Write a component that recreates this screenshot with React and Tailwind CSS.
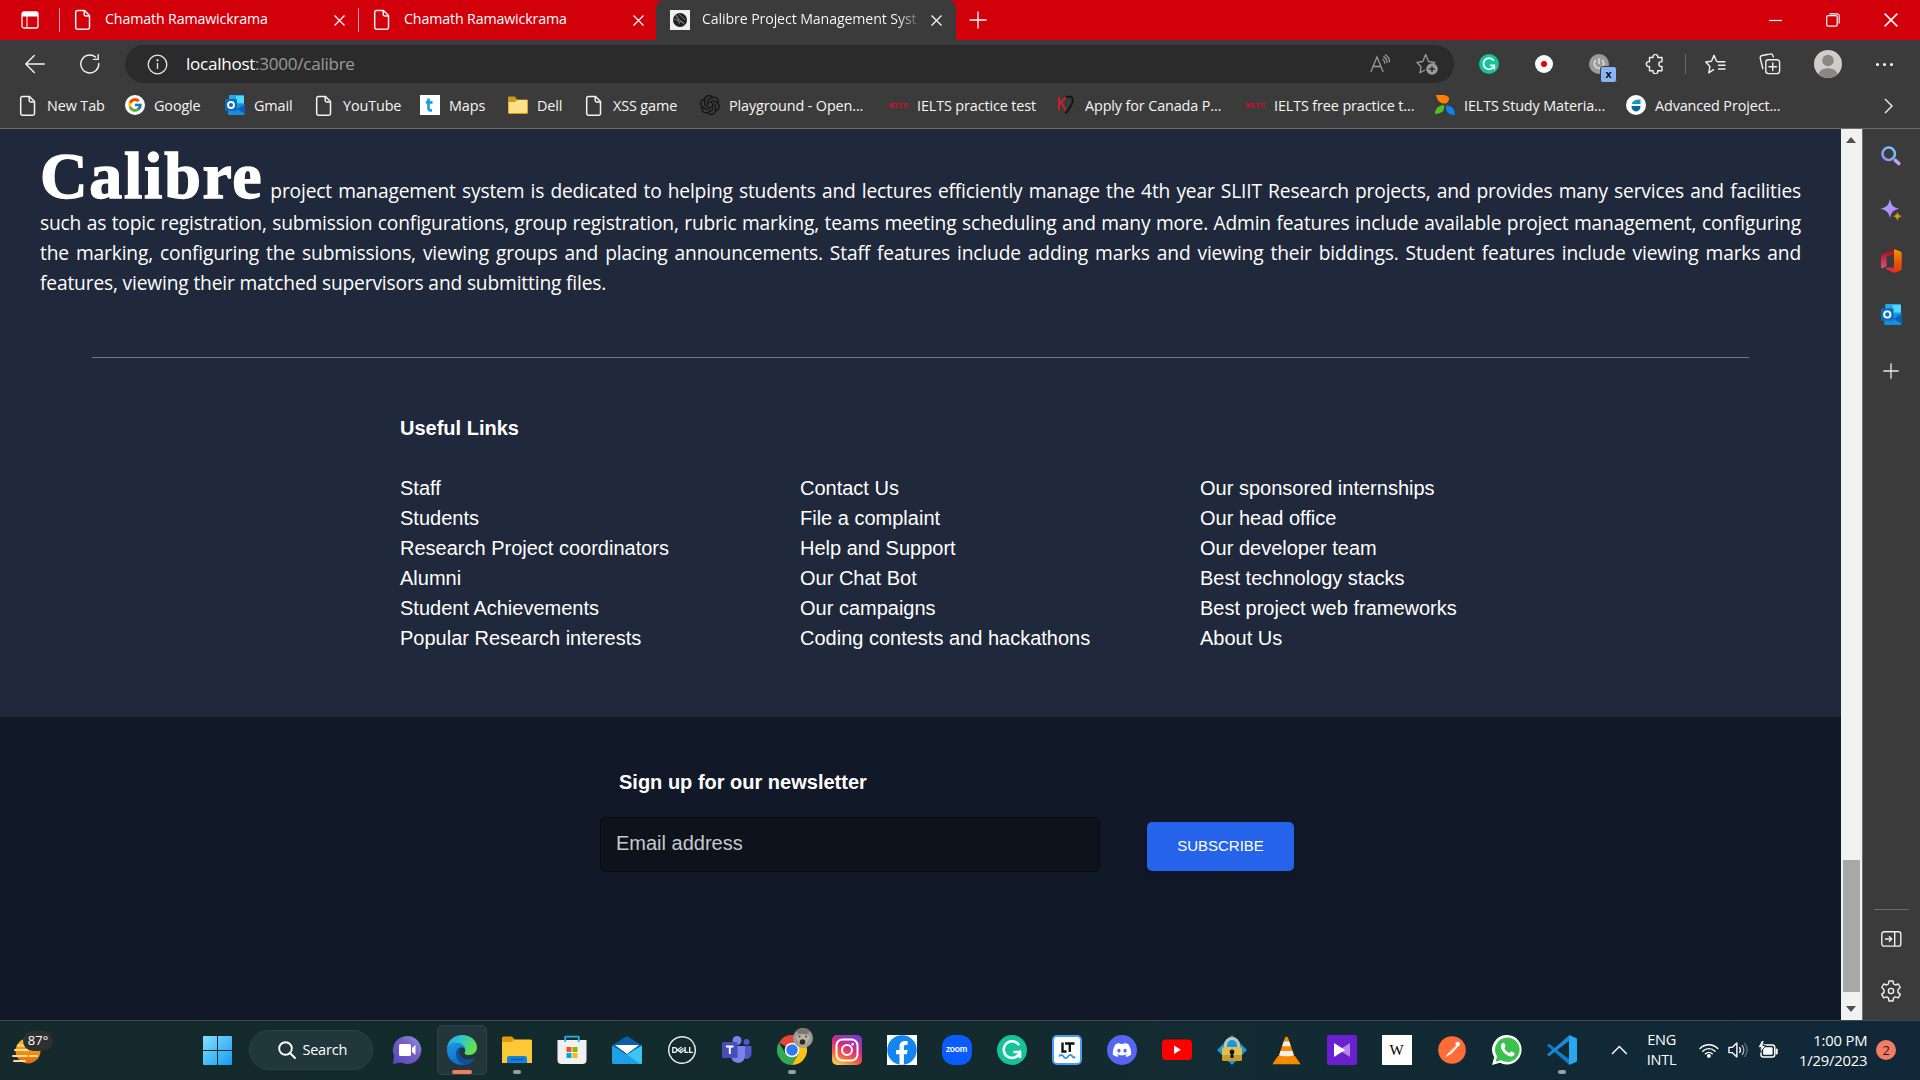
import React from "react";
import { FcGoogle } from "react-icons/fc";
import { SiOpenai, SiDell } from "react-icons/si";
import { FaDiscord } from "react-icons/fa";

const UI = "font-['Open_Sans','Noto_Sans',sans-serif]";

/* ---------- small shared icons ---------- */

const FileIcon = () => (
  <svg width="20" height="22" viewBox="0 0 20 22" fill="none" stroke="#f3f3f3" strokeWidth="1.5" strokeLinejoin="round">
    <path d="M4.5 1.5h7l5 5v12a1.8 1.8 0 0 1-1.8 1.8H4.5a1.8 1.8 0 0 1-1.8-1.8v-15a1.8 1.8 0 0 1 1.8-2z" />
    <path d="M11.2 1.8v3.7a1.4 1.4 0 0 0 1.4 1.4h3.7" />
  </svg>
);

const CloseIcon = ({ size = 11 }) => (
  <svg width={size} height={size} viewBox="0 0 11 11" stroke="#fff" strokeWidth="1.2">
    <path d="M.5.5l10 10M10.5.5l-10 10" />
  </svg>
);

const OutlookIcon = ({ size = 20 }) => (
  <svg width={size} height={size} viewBox="0 0 20 20">
    <rect x="4" y="0" width="15" height="10" rx="1" fill="#28a8ea" />
    <rect x="11" y="1" width="8" height="7" fill="#50d9ff" />
    <path d="M3 9h16.500v10a1 1 0 0 1-1 1H4a1 1 0 0 1-1-1z" fill="#1490df" />
    <path d="M20 9.500v9.500L12 14z" fill="#0a62b8" />
    <rect x="0" y="4" width="12" height="12" rx="1.2" fill="#0f6cbd" />
    <circle cx="6" cy="10" r="3" fill="none" stroke="#fff" strokeWidth="1.800" />
  </svg>
);

const GrammarlyIcon = ({ size }) => (
  <svg width={size} height={size} viewBox="0 0 30 30">
    <circle cx="15" cy="15" r="15" fill="#15c39a" />
    <path d="M21.500 9.300A8.300 8.300 0 1 0 23 17h-5.500M23 16.500v5.500" fill="none" stroke="#fff" strokeWidth="2.600" strokeLinecap="round" strokeLinejoin="round" />
  </svg>
);

/* ---------- tab strip ---------- */

const Tab = ({ title }) => (
  <div className="flex h-10 w-[298px] items-center pl-[13px]">
    <FileIcon />
    <span className="ml-[12px] w-[229px] whitespace-nowrap pb-[2px] text-[14.2px] tracking-[-0.12px] text-white">{title}</span>
    <CloseIcon />
  </div>
);

const TabStrip = () => (
  <div className="flex h-10 items-center bg-[#d1000b]">
    <div className="flex w-[59px] justify-center">
      <svg width="18" height="18" viewBox="0 0 18 18" fill="none">
        <rect x="1" y="1" width="16" height="16" rx="2" stroke="#fff" strokeWidth="1.300" />
        <path d="M1 3a2 2 0 0 1 2-2h12a2 2 0 0 1 2 2v2.500H1z" fill="#fff" />
        <path d="M6 5v12" stroke="#fff" />
      </svg>
    </div>
    <div className="h-6 w-px bg-[#f0a0a4]" />
    <Tab title="Chamath Ramawickrama" />
    <div className="h-6 w-px bg-[#f0a0a4]" />
    <Tab title="Chamath Ramawickrama" />
    <div className="-ml-px flex h-10 w-[300px] items-center rounded-t-[8px] bg-[#3b3b3b] pl-[14px]">
      <svg width="20" height="20" viewBox="0 0 20 20">
        <rect width="20" height="20" fill="#f1f1f1" />
        <circle cx="10" cy="10" r="7" fill="#222" />
        <path d="M5.500 5.500l9 9M4 9l10 4M6.500 5l3 9M9 4l6 6" stroke="#999" strokeWidth=".7" />
      </svg>
      <span className="ml-[12px] w-[218px] whitespace-nowrap bg-gradient-to-r from-white from-90% to-[#4a4a4a] bg-clip-text pb-[2px] text-[14.2px] tracking-[-0.12px] text-transparent">
        Calibre Project Management Syst
      </span>
      <span className="ml-[11px]"><CloseIcon /></span>
    </div>
    <svg className="ml-[13px]" width="18" height="18" viewBox="0 0 18 18" stroke="#fff" strokeWidth="1.300">
      <path d="M9 .5v17M.5 9h17" />
    </svg>
    <div className="ml-auto flex items-center pr-[22px]">
      <svg width="13" height="13" viewBox="0 0 13 13"><path d="M0 6.500h13" stroke="#fff" strokeWidth="1.200" /></svg>
      <svg className="ml-[44px]" width="14" height="14" viewBox="0 0 14 14" fill="none" stroke="#fff" strokeWidth="1.200">
        <rect x=".7" y="2.700" width="10.500" height="10.500" rx="1.500" />
        <path d="M3.500.8h7.500a2.200 2.200 0 0 1 2.200 2.200v7.500" />
      </svg>
      <span className="ml-[44px]"><CloseIcon size={14} /></span>
    </div>
  </div>
);

/* ---------- toolbar ---------- */

const Toolbar = () => (
  <div className="flex h-[48px] items-center bg-[#3b3b3b]">
    <svg className="ml-[25px]" width="20" height="20" viewBox="0 0 20 20" fill="none" stroke="#f3f3f3" strokeWidth="1.400" strokeLinecap="round" strokeLinejoin="round">
      <path d="M19.300 10H.8M9.300 1.500L.8 10l8.500 8.500" />
    </svg>
    <svg className="ml-[35px]" width="20" height="20" viewBox="0 0 20 20" fill="none" stroke="#f3f3f3" strokeWidth="1.400" strokeLinecap="round" strokeLinejoin="round">
      <path d="M18.800 9.500A9 9 0 1 1 15.500 3M18.200.8v4.600h-4.600" />
    </svg>
    <div className="ml-[25px] flex h-[38px] w-[1329px] items-center rounded-full bg-[#2b2b2b]">
      <svg className="ml-[22px]" width="21" height="21" viewBox="0 0 21 21" fill="none" stroke="#e6e6e6" strokeWidth="1.300">
        <circle cx="10.500" cy="10.500" r="9.300" />
        <path d="M10.500 9v6" />
        <circle cx="10.500" cy="6.300" r=".5" fill="#e6e6e6" />
      </svg>
      <span className="ml-[18px] pb-px text-[17.1px] tracking-[-0.28px] text-[#9a9a9a]">
        <span className="text-white">localhost</span>:3000/calibre
      </span>
      <div className="ml-auto flex items-center gap-[25px] pr-[16px]">
        <svg width="21" height="20" viewBox="0 0 21 20" fill="none" stroke="#9a9a9a" strokeWidth="1.300" strokeLinecap="round">
          <path d="M1 17.500L7 3l6 14.500M3.200 12.500h7.700M13 5.500c1.200.9 1.700 2.100 1.700 3.700M13.800 2.800c2.300 1.200 3.300 3.200 3.300 5.800M15.300.8c2.800 1.700 4.200 4 4.200 7" />
        </svg>
        <svg width="22" height="22" viewBox="0 0 22 22" fill="none" stroke="#9a9a9a" strokeWidth="1.300" strokeLinejoin="round">
          <path d="M9 17l-5 2.700 1-6L.9 9.300l5.900-.8L9.700 1.500l2.800 7 6.300.8-1.500 1.700" />
          <circle cx="16" cy="16" r="5.800" fill="#9a9a9a" stroke="none" />
          <path d="M16 13v6M13 16h6" stroke="#2b2b2b" strokeWidth="1.400" />
        </svg>
      </div>
    </div>
    <div className="flex w-[70px] justify-center"><GrammarlyIcon size={20} /></div>
    <div className="flex w-10 justify-center">
      <div className="flex size-[18px] items-center justify-center rounded-full bg-white"><div className="size-[6px] rounded-full bg-[#e60000]" /></div>
    </div>
    <div className="flex w-[74px] justify-center pr-[4px]">
      <div className="relative flex size-5 items-center justify-center rounded-full bg-[#9b9b9b]">
        <svg width="12" height="12" viewBox="0 0 12 12" fill="none" stroke="#e4e4e4" strokeWidth="1.400"><path d="M6 0v6M3 2a4.700 4.700 0 1 0 6 0" /></svg>
        <div className="absolute left-[11px] top-[12px] flex h-[17px] w-[17px] items-center justify-center rounded-[3px] border border-[#3b3b3b] bg-[#8ab4f8] pb-px font-['Liberation_Sans',sans-serif] text-[11px] font-bold text-black">x</div>
      </div>
    </div>
    <div className="flex w-[34px] justify-center">
      <svg width="20" height="20" viewBox="0 0 20 20" fill="none" stroke="#f0f0f0" strokeWidth="1.400" strokeLinejoin="round">
        <path d="M4.500 3.500h3.600a2.400 2.400 0 1 1 4.600 0h4.300v4.200a2.500 2.500 0 1 0 0 4.800v4.200h-4.300a2.400 2.400 0 1 1-4.600 0H4.500v-4.200a2.500 2.500 0 1 1 0-4.800z" />
      </svg>
    </div>
    <div className="flex w-[26px] justify-center"><div className="h-5 w-px bg-[#6c6c6c]" /></div>
    <div className="flex w-[34px] justify-center">
      <svg width="21" height="20" viewBox="0 0 21 20" fill="none" stroke="#f0f0f0" strokeWidth="1.400" strokeLinejoin="round" strokeLinecap="round">
        <path d="M8.500 15.700l-4.700 3.100 1.100-6.300L.8 8l5.700-.8L9 1.300l2.500 5.900M12.500 7.700h7.500M13.500 11.300h6.500M13.500 15h6.500" />
      </svg>
    </div>
    <div className="flex w-[76px] justify-center">
      <svg width="22" height="22" viewBox="0 0 22 22" fill="none" stroke="#f0f0f0" strokeWidth="1.400" strokeLinejoin="round" strokeLinecap="round">
        <rect x="6.800" y="6.800" width="13.800" height="13.800" rx="2.500" />
        <path d="M13.700 10v7.500M10 13.700h7.500M3.800 15.500L1.300 5.500a2.500 2.500 0 0 1 1.800-3L11 1a2.500 2.500 0 0 1 3 1.800l.3 1" />
      </svg>
    </div>
    <div className="flex w-10 justify-center">
      <svg width="28" height="28" viewBox="0 0 28 28">
        <circle cx="14" cy="14" r="14" fill="#cfcdcb" />
        <circle cx="14" cy="10.500" r="5.800" fill="#8b8784" />
        <path d="M4.500 24.200c1-4 4.500-6 9.500-6s8.500 2 9.500 6A14 14 0 0 1 14 28a14 14 0 0 1-9.500-3.800z" fill="#8b8784" />
      </svg>
    </div>
    <div className="flex w-[72px] justify-center gap-[4px]">
      <div className="size-[3px] rounded-full bg-white" /><div className="size-[3px] rounded-full bg-white" /><div className="size-[3px] rounded-full bg-white" />
    </div>
  </div>
);

/* ---------- bookmarks ---------- */

const IeltsIcon = () => (
  <span className="block font-['Liberation_Sans',sans-serif] text-[7.5px] font-bold tracking-[-0.3px] text-[#c8102e]">IELTS</span>
);

const bookmarks = [
  { w: "w-[107px]", label: "New Tab", icon: <FileIcon /> },
  { w: "w-[100px]", label: "Google", icon: <div className="flex size-5 items-center justify-center rounded-full bg-white"><FcGoogle size={16} /></div> },
  { w: "w-[89px]", label: "Gmail", icon: <OutlookIcon /> },
  { w: "w-[106px]", label: "YouTube", icon: <FileIcon /> },
  {
    w: "w-[88px]", label: "Maps",
    icon: <svg width="20" height="20" viewBox="0 0 20 20"><rect width="20" height="20" fill="#fff" /><path d="M8.500 3.500v9.800c0 1.600 1 2.200 3.500 2M5.800 7.300h6.700" fill="none" stroke="#1a9cf0" strokeWidth="2.700" /></svg>,
  },
  {
    w: "w-[76px]", label: "Dell",
    icon: <svg width="20" height="20" viewBox="0 0 20 20"><path d="M0 2.500a1 1 0 0 1 1-1h6l2 3h10a1 1 0 0 1 1 1V18a1 1 0 0 1-1 1H1a1 1 0 0 1-1-1z" fill="#c99a1d" /><path d="M.7 7h6.500l2-2H18.500a.7.7 0 0 1 .7.7V17a1 1 0 0 1-1 1H1.700a1 1 0 0 1-1-1z" fill="#ffe08a" /></svg>,
  },
  { w: "w-[116px]", label: "XSS game", icon: <FileIcon /> },
  { w: "w-[188px]", label: "Playground - Open...", icon: <SiOpenai size={20} color="#111" /> },
  { w: "w-[168px]", label: "IELTS practice test", icon: <IeltsIcon /> },
  {
    w: "w-[189px]", label: "Apply for Canada P...",
    icon: <svg width="20" height="20" viewBox="0 0 20 20" fill="none"><path d="M3 2v13M9.500 2.500L3.500 8.500M5 7l4.500 8" stroke="#c8202c" strokeWidth="2" /><path d="M10 2c5-1.500 8 1 6.500 5.500S12 15 9.500 18.500" stroke="#161616" strokeWidth="2" /></svg>,
  },
  { w: "w-[190px]", label: "IELTS free practice t...", icon: <IeltsIcon /> },
  {
    w: "w-[191px]", label: "IELTS Study Materia...",
    icon: <svg width="20" height="20" viewBox="0 0 20 20"><path d="M1 0c6-.5 12 0 13 3 .5 3-2 6-5 5.500C4.500 8 2 5 1 0z" fill="#ff8000" /><path d="M0 19c0-5 3-8.500 9-9 1 5-2 9-9 9z" fill="#4fc11f" /><path d="M11 10.500c5-.5 9 3 9 9.500-6 0-10-3-9-9.500z" fill="#0a84ea" /></svg>,
  },
  {
    w: "w-[170px]", label: "Advanced Project...",
    icon: <svg width="20" height="20" viewBox="0 0 20 20"><circle cx="10" cy="10" r="10" fill="#fff" /><path d="M6 9c0-3 3-4.500 8.500-4.500V9z" fill="#1295d3" /><path d="M5.500 11h9c0 3.500-2 5-4.500 5.500-2.500-.5-4.500-2-4.500-5.500z" fill="#0a66a6" /></svg>,
  },
];

const Bookmarks = () => (
  <div className="flex h-[41px] items-center border-b border-[#6e6e6e] bg-[#3b3b3b] pb-[5px] pl-[18px]">
    {bookmarks.map((b, i) => (
      <div key={i} className={`flex shrink-0 items-center ${b.w}`}>
        <div className="flex w-5 shrink-0 justify-center">{b.icon}</div>
        <span className="ml-[9px] whitespace-nowrap text-[14.4px] tracking-[-0.12px] text-[#f5f5f5]">{b.label}</span>
      </div>
    ))}
    <svg className="ml-[88px]" width="9" height="16" viewBox="0 0 9 16" fill="none" stroke="#f3f3f3" strokeWidth="1.400"><path d="M1 1l7 7-7 7" /></svg>
  </div>
);

/* ---------- page ---------- */

const linkColumns = [
  ["Staff", "Students", "Research Project coordinators", "Alumni", "Student Achievements", "Popular Research interests"],
  ["Contact Us", "File a complaint", "Help and Support", "Our Chat Bot", "Our campaigns", "Coding contests and hackathons"],
  ["Our sponsored internships", "Our head office", "Our developer team", "Best technology stacks", "Best project web frameworks", "About Us"],
];

const Page = () => (
  <main className="flex w-[1841px] flex-col font-['Liberation_Sans',Arial,sans-serif] text-[20px] leading-[30px] text-white">
    <section className="h-[588px] bg-[#1f293b]">
      <div className={`px-10 pt-[14px] text-[19.2px] tracking-[-0.16px] ${UI}`}>
        <p className="flex h-[65px] items-baseline justify-between whitespace-nowrap [text-align-last:justify]">
          <span className="mr-[7px] font-['Liberation_Serif',serif] text-[66px] font-bold leading-[66px] tracking-[1.7px] [-webkit-text-stroke:1.4px_white]">Calibre</span>
          <span className="flex-1">project management system is dedicated to helping students and lectures efficiently manage the 4th year SLIIT Research projects, and provides many services and facilities</span>
        </p>
        <p className="whitespace-nowrap [text-align-last:justify]">such as topic registration, submission configurations, group registration, rubric marking, teams meeting scheduling and many more. Admin features include available project management, configuring</p>
        <p className="whitespace-nowrap [text-align-last:justify]">the marking, configuring the submissions, viewing groups and placing announcements. Staff features include adding marks and viewing their biddings. Student features include viewing marks and</p>
        <p className="whitespace-nowrap">features, viewing their matched supervisors and submitting files.</p>
      </div>
      <hr className="mx-[92px] mt-[59px] border-t border-[#75797f]" />
      <div className="ml-[400px] mt-[55px]">
        <h5 className="font-bold">Useful Links</h5>
        <div className="mt-[30px] grid w-[1200px] grid-cols-3">
          {linkColumns.map((col, i) => (
            <ul key={i}>{col.map((l) => <li key={l}>{l}</li>)}</ul>
          ))}
        </div>
      </div>
    </section>
    <section className="h-[303px] bg-[#111827] pl-[600px] pt-[50px]">
      <p className="pl-[19px] font-bold">Sign up for our newsletter</p>
      <div className="mt-[20px] flex items-start">
        <div className="flex h-[55px] w-[500px] items-center rounded-[5px] border border-[#080b11] bg-[#0e121b] pb-[3px] pl-[15px] text-[#c6c9cd]">Email address</div>
        <button className="ml-[47px] mt-[5px] h-[49px] w-[147px] rounded-[5px] bg-[#2563eb] pb-[2px] text-[15px] leading-[18px] shadow-md">SUBSCRIBE</button>
      </div>
    </section>
  </main>
);

const Scrollbar = () => (
  <div className="flex w-[22px] flex-col items-center border-r border-[#6e6e6e] bg-[#f1f1f1] pr-px">
    <svg className="mt-[8px]" width="10" height="6" viewBox="0 0 10 6"><path d="M5 0l5 6H0z" fill="#505050" /></svg>
    <div className="mt-[717px] h-[132px] w-[17px] bg-[#a8a8a8]" />
    <svg className="mt-[14px]" width="10" height="6" viewBox="0 0 10 6"><path d="M5 6l5-6H0z" fill="#505050" /></svg>
  </div>
);

const Sidebar = () => (
  <aside className="flex w-[57px] flex-col items-center bg-[#3b3b3b] pr-px">
    <svg className="mt-[17px]" width="20" height="20" viewBox="0 0 20 20" fill="none">
      <defs><linearGradient id="lens" x1="0" y1="1" x2="1" y2="0"><stop stopColor="#8f8cff" /><stop offset="1" stopColor="#6fd3ff" /></linearGradient></defs>
      <circle cx="7.700" cy="7.700" r="6.200" stroke="url(#lens)" strokeWidth="2.500" />
      <path d="M14.500 14.500l3.300 3" stroke="#c9a0f5" strokeWidth="3.600" strokeLinecap="round" />
    </svg>
    <svg className="mt-[33px]" width="22" height="22" viewBox="0 0 22 22">
      <defs><linearGradient id="spark" x1="0" y1="0" x2="1" y2="1"><stop stopColor="#6cc8ff" /><stop offset=".5" stopColor="#b78cff" /><stop offset="1" stopColor="#a98bf0" /></linearGradient></defs>
      <path d="M10 0c1 6 3 8.500 9.500 9.700C13 11 11 13 10 19.500 8.700 13 6.500 11 .3 9.700 6.500 8.500 8.700 6 10 0z" fill="url(#spark)" />
      <path d="M17.500 12.500c.6 3 1.500 4 4.500 4.700-3 .6-3.900 1.700-4.500 4.700-.7-3-1.600-4.100-4.500-4.700 2.900-.7 3.800-1.700 4.500-4.700z" fill="#d09a13" />
    </svg>
    <svg className="mt-[28px]" width="21" height="24" viewBox="0 0 21 24">
      <defs><linearGradient id="off" x1="0" y1="0" x2="0" y2="1"><stop stopColor="#a30a0a" /><stop offset="1" stopColor="#e0508c" /></linearGradient><linearGradient id="off2" x1="0" y1="0" x2="0" y2="1"><stop stopColor="#f09a00" /><stop offset=".6" stopColor="#e8500a" /><stop offset="1" stopColor="#d83b01" /></linearGradient></defs>
      <path d="M13 0v5L5.500 7.500V17L1.200 19.200A2 2 0 0 1 0 17.500V8a3 3 0 0 1 1.800-2.800z" fill="url(#off)" />
      <path d="M4.500 18.500H13V24L5.300 20z" fill="#e8244a" />
      <path d="M13 0l6 2.300A2.500 2.500 0 0 1 20.700 4.600v14.800A2.500 2.500 0 0 1 19 21.700L13 24z" fill="url(#off2)" />
    </svg>
    <div className="mt-[31px]"><OutlookIcon size={21} /></div>
    <svg className="mt-[38px]" width="16" height="16" viewBox="0 0 16 16" stroke="#e8e8e8" strokeWidth="1.300"><path d="M8 .3v15.400M.3 8h15.400" /></svg>
    <div className="mt-auto h-px w-[35px] bg-[#6c6c6c]" />
    <svg className="mt-[21px]" width="21" height="16" viewBox="0 0 21 16" fill="none" stroke="#f0f0f0" strokeWidth="1.400" strokeLinejoin="round">
      <rect x=".8" y=".8" width="19" height="14.300" rx="2.200" />
      <path d="M13.700 1v14M4 8h6.500M8 5.300L10.700 8 8 10.700" />
    </svg>
    <svg className="mb-[18px] mt-[33px]" width="22" height="22" viewBox="0 0 22 22" fill="none" stroke="#f0f0f0" strokeWidth="1.400" strokeLinejoin="round">
      <path d="M9 1h4l.6 3 1.800 1 2.900-1 2 3.500-2.300 2v2.900l2.300 2-2 3.500-2.900-1-1.800 1L13 21H9l-.6-3.100-1.800-1-2.900 1-2-3.500 2.300-2V9.500l-2.300-2L3.700 4l2.900 1 1.800-1z" />
      <circle cx="11" cy="11" r="2.600" />
    </svg>
  </aside>
);

/* ---------- taskbar ---------- */

const StartIcon = () => (
  <svg width="29" height="29" viewBox="0 0 29 29">
    <defs><linearGradient id="win" x1="0" y1="0" x2="1" y2="1"><stop stopColor="#86e0fb" /><stop offset="1" stopColor="#129bf5" /></linearGradient></defs>
    <path d="M1 0h13v14H0V1a1 1 0 0 1 1-1zM15 0h13a1 1 0 0 1 1 1v13H15zM0 15h14v14H1a1 1 0 0 1-1-1zM15 15h14v13a1 1 0 0 1-1 1H15z" fill="url(#win)" />
  </svg>
);

const ChatIcon = () => (
  <svg width="30" height="30" viewBox="0 0 30 30">
    <defs><linearGradient id="chat" x1="1" y1="0" x2="0" y2="1"><stop stopColor="#7fa2e6" /><stop offset=".4" stopColor="#7a5fc0" /><stop offset="1" stopColor="#5048c4" /></linearGradient></defs>
    <path d="M15 1a14 14 0 1 1-6 26.500L1 29l1-8.500A14 14 0 0 1 15 1z" fill="url(#chat)" />
    <rect x="7" y="9" width="12" height="12" rx="1.500" fill="#fff" />
    <path d="M20 13l3.500-3v10L20 17z" fill="#fff" />
  </svg>
);

const EdgeIcon = () => (
  <svg width="30" height="30" viewBox="0 0 30 30">
    <defs>
      <linearGradient id="e1" x1="0" y1="0" x2="1" y2=".4"><stop stopColor="#2aa8e8" /><stop offset=".5" stopColor="#2fc7c9" /><stop offset="1" stopColor="#66e04f" /></linearGradient>
      <linearGradient id="e2" x1="0" y1="0" x2=".6" y2="1"><stop stopColor="#1b9de2" /><stop offset="1" stopColor="#0f62c4" /></linearGradient>
    </defs>
    <path d="M0 13C1 5 7.500 0 15 0c9 0 15 6 15 12.500 0 4.500-3.500 7.500-8 7.500-3.500 0-5.200-1.200-4.200-2.800C19 15 18 10 12 8.500 7 7.500 2 9 0 13z" fill="url(#e1)" />
    <path d="M0 15C0 10 4 7.500 9 7.500c5 0 8.500 3.300 9 7-1-2.200-3.200-2.700-5-1.500-3 2.500-2 8 2.300 10.500 3.500 2 8.200 1.500 12.200-.8C25 27.500 20.500 30 15 30 6.500 30 0 23.500 0 15z" fill="url(#e2)" />
    <path d="M10 14.500c-3 6.500 1.500 14 8 15 3.800-.8 7-3.200 9.200-6.300-4 2-8 2-11 .3-4-2.300-5-7.200-2.200-10.500-1.500-.6-3.200 0-4 1.500z" fill="#0c4f9e" />
  </svg>
);

const ExplorerIcon = () => (
  <svg width="30" height="28" viewBox="0 0 30 28">
    <path d="M0 2a1.500 1.500 0 0 1 1.500-1.500H10L13 4v6H0z" fill="#e09b0b" />
    <path d="M0 6h9.500L12.500 3.500H28.500A1.500 1.500 0 0 1 30 5v22H0z" fill="#fdc835" />
    <path d="M5 27v-5a2 2 0 0 1 2-2h16a2 2 0 0 1 2 2v5z" fill="#1284dd" />
    <path d="M8.500 23.500h13" stroke="#0b5aa8" strokeWidth="1.500" />
  </svg>
);

const StoreIcon = () => (
  <svg width="30" height="30" viewBox="0 0 30 30">
    <path d="M8.200 7V1.700h13.600V7" fill="none" stroke="#1fb4f0" strokeWidth="1.800" strokeLinejoin="round" />
    <path d="M.5 5h29v20a4 4 0 0 1-4 4h-21a4 4 0 0 1-4-4z" fill="#f1f1f1" />
    <path d="M8.200 5V7M21.800 5V7" stroke="#1fb4f0" strokeWidth="1.800" />
    <path d="M9.500 12h5v5h-5z" fill="#f25022" /><path d="M15.500 12h5v5h-5z" fill="#7fba00" />
    <path d="M9.500 18h5v5h-5z" fill="#00a4ef" /><path d="M15.500 18h5v5h-5z" fill="#ffb900" />
  </svg>
);

const MailIcon = () => (
  <svg width="30" height="28" viewBox="0 0 30 28">
    <path d="M0 9.500L15 0l15 9.500V15H0z" fill="#0b5da8" />
    <path d="M3 9h24l-12 9z" fill="#fff" />
    <path d="M0 9.500l15 9L30 9.500V26.500a1.500 1.500 0 0 1-1.500 1.500h-27A1.500 1.500 0 0 1 0 26.500z" fill="#1f9fe6" />
    <path d="M30 9.500l-15 9L28 28h.5a1.500 1.500 0 0 0 1.500-1.500z" fill="#38c6f4" />
  </svg>
);

const TeamsIcon = () => (
  <svg width="30" height="28" viewBox="0 0 30 28">
    <circle cx="24.500" cy="6" r="3" fill="#5059c9" /><path d="M20 10h9.500v8a5 5 0 0 1-7 4.500z" fill="#5059c9" />
    <circle cx="15" cy="4.500" r="4.500" fill="#7b83eb" />
    <path d="M9 10h14v9.500a7 7 0 0 1-13.500 3z" fill="#7b83eb" />
    <rect x="0" y="6" width="15.500" height="16" rx="1.500" fill="#464eb8" />
    <path d="M4 10.500h7.500M7.800 10.500V18" stroke="#fff" strokeWidth="1.900" />
  </svg>
);

const ChromeIcon = () => (
  <div className="relative">
    <svg width="30" height="30" viewBox="0 0 30 30">
      <path d="M15 15L2 7.500A15 15 0 0 1 28 7.500H15z" fill="#ea4335" />
      <path d="M15 15l6.500 3.700L15 30A15 15 0 0 1 2 7.500l6.500 11.300z" fill="#34a853" />
      <path d="M15 7.500h13A15 15 0 0 1 15 30l6.500-11.300z" fill="#fbc116" />
      <circle cx="15" cy="15" r="7.300" fill="#fff" /><circle cx="15" cy="15" r="5.800" fill="#3079ee" />
    </svg>
    <svg className="absolute -top-[7px] left-[16px]" width="20" height="20" viewBox="0 0 20 20">
      <circle cx="10" cy="10" r="10" fill="#a09a90" />
      <path d="M3 3c3-4 11-4 14 0l-4 4-7-1z" fill="#7b776f" />
      <path d="M3 9c3-4 11-4 14 0l-3 6-4 4-4-4z" fill="#b9b2a6" />
      <circle cx="9.500" cy="14" r="2.800" fill="#2d2a28" /><circle cx="6.500" cy="8.500" r="1" fill="#4a4642" /><circle cx="13" cy="8.500" r="1" fill="#4a4642" />
    </svg>
  </div>
);

const InstagramIcon = () => (
  <svg width="30" height="30" viewBox="0 0 30 30" fill="none">
    <defs><linearGradient id="ig" x1=".2" y1="1" x2=".7" y2="0"><stop stopColor="#fdc950" /><stop offset=".3" stopColor="#f4643c" /><stop offset=".6" stopColor="#d22c85" /><stop offset="1" stopColor="#7a3bc8" /></linearGradient></defs>
    <rect width="30" height="30" rx="5" fill="url(#ig)" />
    <rect x="4.500" y="4.500" width="21" height="21" rx="6" stroke="#fff" strokeWidth="2" />
    <circle cx="15" cy="15" r="5" stroke="#fff" strokeWidth="2" /><circle cx="20.700" cy="9.300" r="1.300" fill="#fff" />
  </svg>
);

const FacebookIcon = () => (
  <svg width="30" height="30" viewBox="0 0 30 30">
    <rect width="30" height="30" fill="#fff" /><circle cx="15" cy="15" r="14.700" fill="#1285f0" />
    <path d="M12.500 29.500V19.300H9v-4.200h3.500v-3.300c0-3.800 2.200-5.800 5.500-5.800 1.300 0 2.700.2 2.700.2v3.600h-1.600c-1.700 0-2.200 1-2.200 2.100v3.200h3.700l-.7 4.200h-3v10.200a15 15 0 0 1-4.400 0z" fill="#fff" />
  </svg>
);

const ZoomIcon = () => (
  <div className="flex size-[30px] items-center justify-center rounded-[12px] bg-[#0b5cff]">
    <span className="pb-[3px] font-[Lato,sans-serif] text-[9px] font-bold leading-none tracking-[-0.2px] text-white">zoom</span>
  </div>
);

const LanguageToolIcon = () => (
  <div className="flex size-[30px] flex-col items-center rounded-[5px] border-2 border-[#4a9df5] bg-white">
    <svg width="26" height="26" viewBox="0 0 26 26" fill="none">
      <path d="M8.500 5.500v9h4M11 6.500h9.500M15.800 6.500v8.500" stroke="#111" strokeWidth="2.400" />
      <path d="M5 19.500c1.500-2.200 3-2.200 4.500 0s3 2.200 4.500 0 3-2.200 4.500 0 2 1 2.500 0" stroke="#2f8de8" strokeWidth="1.700" />
    </svg>
  </div>
);

const YoutubeIcon = () => (
  <svg width="30" height="22" viewBox="0 0 30 22"><rect y=".5" width="30" height="20.500" rx="4" fill="#f00" /><path d="M12 6.500l7 4.200-7 4.300z" fill="#fff" /></svg>
);

const LockIcon = () => (
  <svg width="30" height="30" viewBox="0 0 30 30">
    <path d="M15 0l15 15-15 15L0 15z" fill="#1b96e0" />
    <path d="M8.500 14V10a6.500 6.500 0 0 1 13 0V14" fill="none" stroke="#c4c4b8" strokeWidth="3" />
    <rect x="5" y="12" width="20" height="14" rx="2" fill="#e3bd4e" /><path d="M5 20h20v4a2 2 0 0 1-2 2H7a2 2 0 0 1-2-2z" fill="#c99a2c" />
    <circle cx="15" cy="17" r="2.400" fill="#111" /><path d="M14 17h2l.7 6h-3.400z" fill="#111" />
  </svg>
);

const VlcIcon = () => (
  <svg width="27" height="29" viewBox="0 0 27 29">
    <path d="M5 20h17l4.500 6.500a1 1 0 0 1-1 1.800h-24a1 1 0 0 1-1-1.800z" fill="#f48b00" />
    <path d="M12 1.500c.3-1 2.700-1 3 0L22 22c-2 3-15 3-17 0z" fill="#f48b00" />
    <path d="M10.700 5.500h5.600l1.500 4.700H9.200zM7.500 15h12l1.300 4.200c-3 1.500-11.600 1.500-14.600 0z" fill="#eee" />
  </svg>
);

const PlayerIcon = () => (
  <svg width="30" height="30" viewBox="0 0 30 30">
    <rect width="30" height="30" rx="2" fill="#6a20cf" />
    <path d="M23 8v14l-11-7z" fill="#c9aef2" opacity=".75" />
    <path d="M7 8l11 7-11 7z" fill="#fff" />
  </svg>
);

const WikiIcon = () => (
  <div className="flex size-[30px] items-center justify-center bg-white font-['Liberation_Serif',serif] text-[15px] leading-none text-black">W</div>
);

const PostmanIcon = () => (
  <svg width="28" height="28" viewBox="0 0 28 28">
    <circle cx="14" cy="14" r="13.800" fill="#ff6c37" />
    <path d="M7 21.500l4.500-6 7-6.500 1.500 1.500-6.500 7z" fill="#fff" /><circle cx="19.700" cy="8" r="2.300" fill="#fff" />
    <path d="M11 17l7.500-7.500" stroke="#ff6c37" strokeWidth=".6" />
  </svg>
);

const WhatsappIcon = () => (
  <svg width="30" height="30" viewBox="0 0 30 30">
    <path d="M15.200 0A14.700 14.700 0 1 1 8 27.700L0 30l2.200-7.800A14.700 14.700 0 0 1 15.200 0z" fill="#fff" />
    <path d="M15.200 2.500a12.200 12.200 0 1 1-6 22.700l-5.600 1.500 1.500-5.300A12.200 12.200 0 0 1 15.200 2.500z" fill="#3cc14f" />
    <path d="M10.500 8c.8-.5 1.600-.3 2 .5l1 2.500c.2.700-1.300 2-1 2.600 1 2 2.500 3.500 4.700 4.400.7.200 1.700-1.900 2.300-1.600l2.600 1.300c.9.500.2 2.500-.5 3-4.500 3-13-4.500-12.700-9.500.1-1.400.8-2.600 1.600-3.200z" fill="#fff" />
  </svg>
);

const VsCodeIcon = () => (
  <svg width="30" height="30" viewBox="0 0 30 30">
    <path d="M0 10.500l2-1.800 20 15.300v5.500z" fill="#0f7cc9" />
    <path d="M0 19.500l2 1.800L22 6V.5z" fill="#1a8ad6" />
    <path d="M22 0l7 3a2 2 0 0 1 1 1.500v21a2 2 0 0 1-1 1.500l-7 3z" fill="#29a8ef" />
    <path d="M22 8v14l-9-7z" fill="#142c31" />
  </svg>
);

const pinned = [
  { icon: <ChatIcon /> },
  { icon: <EdgeIcon />, active: true },
  { icon: <ExplorerIcon />, open: true },
  { icon: <StoreIcon /> },
  { icon: <MailIcon /> },
  { icon: <SiDell size={28} color="#eef2f2" /> },
  { icon: <TeamsIcon /> },
  { icon: <ChromeIcon />, open: true },
  { icon: <InstagramIcon /> },
  { icon: <FacebookIcon /> },
  { icon: <ZoomIcon /> },
  { icon: <GrammarlyIcon size={30} /> },
  { icon: <LanguageToolIcon /> },
  { icon: <div className="flex size-[30px] items-center justify-center rounded-full bg-[#5865f2]"><FaDiscord size={20} color="#fff" /></div> },
  { icon: <YoutubeIcon /> },
  { icon: <LockIcon /> },
  { icon: <VlcIcon /> },
  { icon: <PlayerIcon /> },
  { icon: <WikiIcon /> },
  { icon: <PostmanIcon /> },
  { icon: <WhatsappIcon /> },
  { icon: <VsCodeIcon />, open: true },
];

const Taskbar = () => (
  <footer className="flex h-[60px] items-center border-t border-[#414b4d] bg-gradient-to-r from-[#142a2d] via-[#132b2e] to-[#11283a] pb-px">
    <div className="relative mb-[3px] ml-[12px] h-[36px] w-[42px]">
      <svg className="mt-[6px]" width="30" height="28" viewBox="0 0 30 28">
        <defs><linearGradient id="sun" x1="0" y1="0" x2="0" y2="1"><stop stopColor="#ffc21a" /><stop offset="1" stopColor="#e0670c" /></linearGradient></defs>
        <circle cx="16" cy="14" r="12.500" fill="url(#sun)" />
        <path d="M6 8.500h9M3 13h13M1 19h14M18 19h7M2 24h11" stroke="#fbdca0" strokeWidth="2" strokeLinecap="round" />
      </svg>
      <div className="absolute left-[11px] top-0 flex h-[20px] w-[30px] items-center justify-center rounded-full bg-[#2d2f31] text-[13px] text-white">87°</div>
    </div>
    <div className="ml-[150px]"><StartIcon /></div>
    <div className="ml-[17px] flex h-10 w-[125px] items-center rounded-full border border-[#2c4346] bg-[#20373b] pl-[28px]">
      <svg width="18" height="18" viewBox="0 0 18 18" fill="none" stroke="#fff" strokeWidth="1.900" strokeLinecap="round"><circle cx="7.500" cy="7.500" r="6.300" /><path d="M12 12l5 5" /></svg>
      <span className="ml-[6px] text-[14.5px] tracking-[-0.2px] text-white">Search</span>
    </div>
    <div className="ml-[6px] flex">
      {pinned.map((p, i) => (
        <div key={i} className="flex w-[55px] justify-center">
          <div className={p.active ? "relative flex h-[50px] w-[50px] items-center justify-center rounded-[5px] border border-[#2e4347] bg-[#22373c]" : "relative flex h-[50px] w-[50px] items-center justify-center"}>
            {p.icon}
            {p.active && <div className="absolute bottom-0 h-[4px] w-[20px] rounded-full bg-[#f47c64]" />}
            {p.open && <div className="absolute bottom-px h-[4px] w-[8px] rounded-full bg-[#95a0a3]" />}
          </div>
        </div>
      ))}
    </div>
    <svg className="ml-[22px]" width="17" height="10" viewBox="0 0 17 10" fill="none" stroke="#fff" strokeWidth="1.500"><path d="M1 9l7.500-7.500L16 9" /></svg>
    <div className="ml-[18px] w-[32px] text-center text-[14.5px] leading-[20px] tracking-[-0.2px] text-white">ENG<br />INTL</div>
    <svg className="ml-[22px]" width="20" height="16" viewBox="0 0 20 16" fill="none" stroke="#fff" strokeWidth="1.500" strokeLinecap="round">
      <path d="M1 6.500a12.500 12.500 0 0 1 18 0M3.800 9.200a8.700 8.700 0 0 1 12.400 0M6.600 11.800a4.900 4.900 0 0 1 6.800 0" /><circle cx="10" cy="14" r="1.200" fill="#fff" />
    </svg>
    <svg className="ml-[9px]" width="21" height="18" viewBox="0 0 21 18" fill="none" stroke="#fff" strokeWidth="1.400" strokeLinejoin="round" strokeLinecap="round">
      <path d="M1 6.300h3.500L9 2v14l-4.500-4.300H1zM11.800 6.500c1 1.500 1 3.500 0 5" /><path d="M14.500 4.500c2 2.500 2 6.500 0 9" stroke="#aab4b6" /><path d="M17 2.500c3 4 3 9 0 13" stroke="#5c6c70" />
    </svg>
    <svg className="ml-[9px]" width="21" height="18" viewBox="0 0 21 18" fill="none" stroke="#fff" strokeWidth="1.500">
      <rect x="3" y="4" width="14" height="12" rx="2.500" /><rect x="5.200" y="6.200" width="9.600" height="7.600" rx="1" fill="#fff" stroke="none" /><path d="M19 8.500v4" strokeWidth="2" strokeLinecap="round" />
      <path d="M4 -1L0 6.500h3L2 12l6-7.500H4.800L6.500 -1z" fill="#fff" stroke="#142c31" strokeWidth=".9" />
    </svg>
    <div className="ml-auto w-[90px] text-right text-[14.8px] leading-[20px] tracking-[-0.2px] text-white">1:00 PM<br />1/29/2023</div>
    <div className="ml-[9px] mr-[24px] flex size-5 items-center justify-center rounded-full bg-[#f47c64] text-[13px] leading-none text-[#1c1c1c]">2</div>
  </footer>
);

export default function App() {
  return (
    <div className={`h-[1080px] w-[1920px] overflow-hidden bg-[#3b3b3b] ${UI}`}>
      <TabStrip />
      <Toolbar />
      <Bookmarks />
      <div className="flex h-[891px]">
        <Page />
        <Scrollbar />
        <Sidebar />
      </div>
      <Taskbar />
    </div>
  );
}
